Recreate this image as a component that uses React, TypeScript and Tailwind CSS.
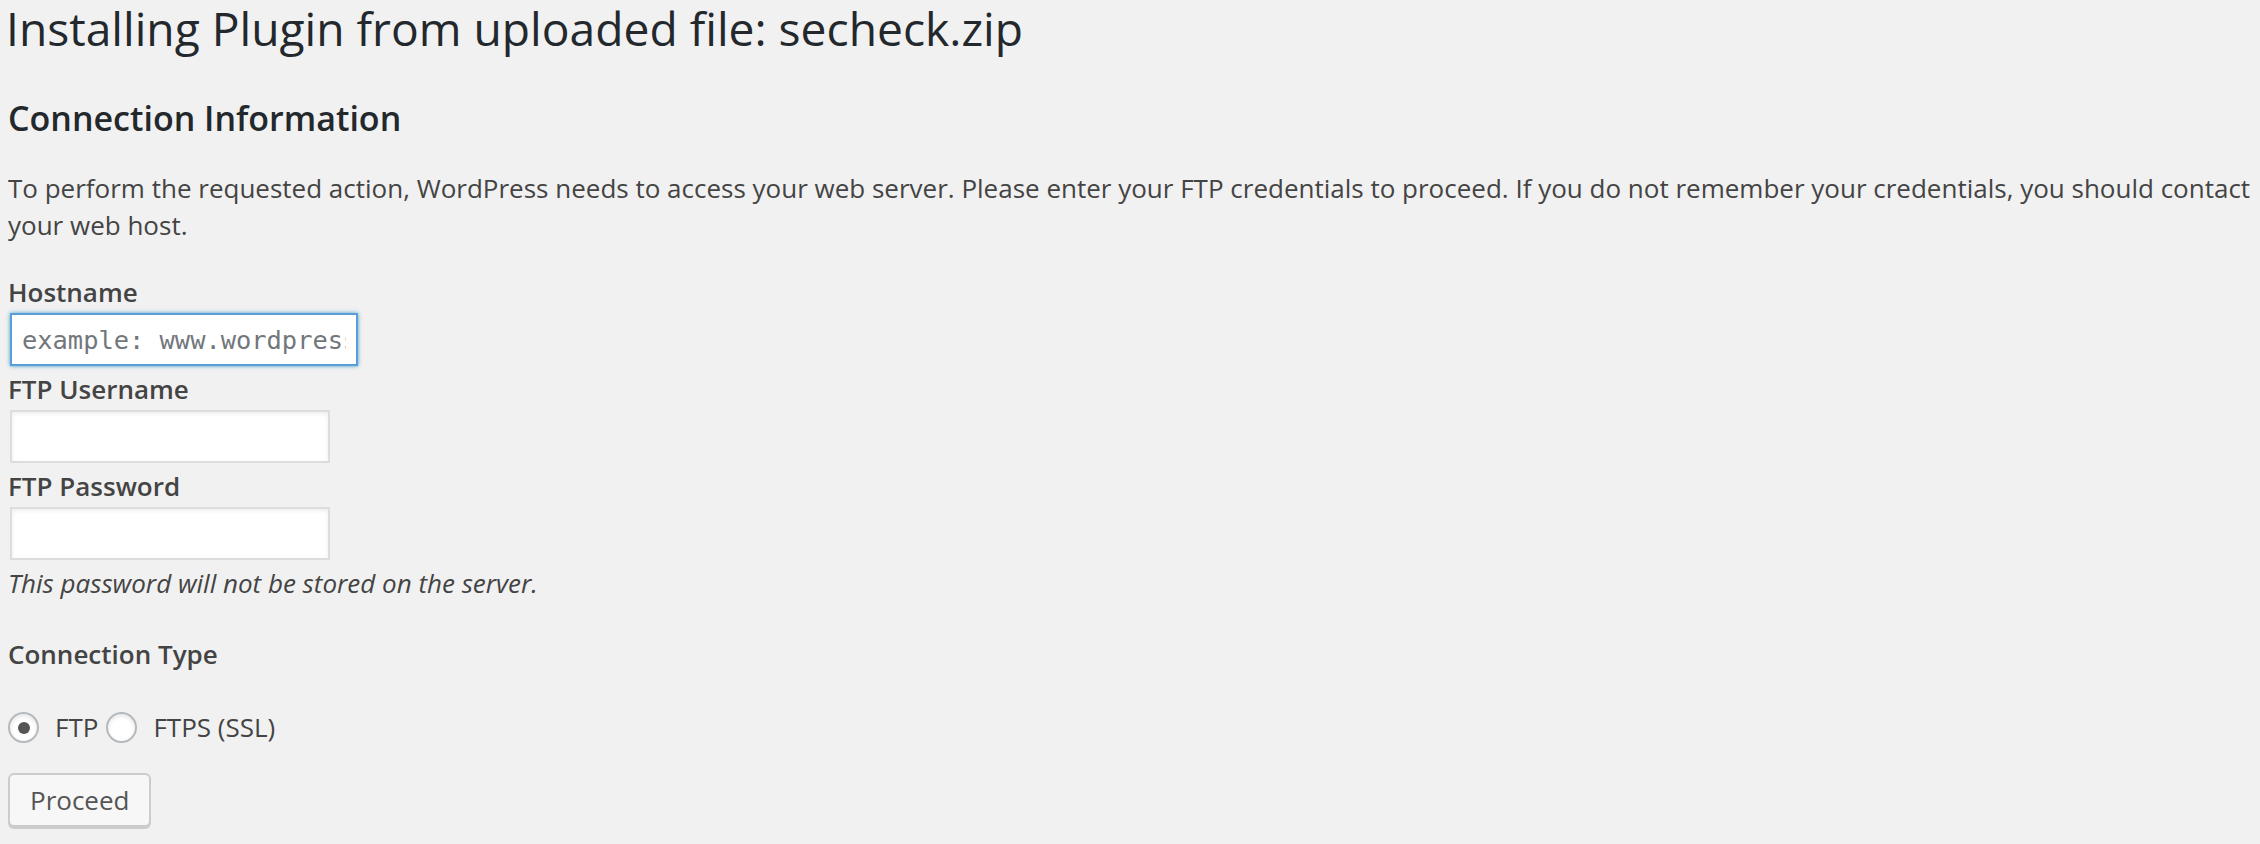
import React from 'react';

export default function App() {
  return (
    <div className="min-h-screen bg-[#f1f1f1] font-['Open_Sans',sans-serif] text-[#444] overflow-hidden">
      <div className="pl-2 pr-2">
        {/* PAGE TITLE */}
        <h1 className="mt-[-1px] ml-[-2px] text-[46.2px] leading-[60px] font-normal text-[#23282d]">
          Installing Plugin from uploaded file: secheck.zip
        </h1>

        {/* CONNECTION FORM */}
        <form className="flex flex-col items-start">
          <h2 className="mt-[37px] text-[34px] leading-[44px] font-semibold text-[#23282d]">Connection Information</h2>

          <p className="mt-[30px] text-[26px] leading-[37px]">
            To perform the requested action, WordPress needs to access your web server. Please enter your FTP credentials to proceed. If you do not remember your credentials, you should contact your web host.
          </p>

          <label htmlFor="hostname" className="mt-[30px] text-[26px] leading-[37px] font-semibold">Hostname</label>
          <input
            id="hostname"
            type="text"
            placeholder="example: www.wordpress.org"
            className="mt-[2px] ml-[2px] w-[348px] h-[53px] bg-white border-2 border-[#5b9dd9] shadow-[0_0_4px_rgba(30,140,190,0.8)] px-[10px] font-['DejaVu_Sans_Mono',monospace] text-[25.4px] text-[#333] placeholder:text-[#72777c] outline-none"
          />

          <label htmlFor="username" className="mt-[5px] text-[26px] leading-[37px] font-semibold">FTP Username</label>
          <input
            id="username"
            type="text"
            className="mt-[2px] ml-[2px] w-[320px] h-[53px] bg-white border-2 border-[#ddd] shadow-[inset_0_2px_4px_rgba(0,0,0,0.07)] px-[10px] text-[26px] outline-none"
          />

          <label htmlFor="password" className="mt-[5px] text-[26px] leading-[37px] font-semibold">FTP Password</label>
          <input
            id="password"
            type="password"
            className="mt-[2px] ml-[2px] w-[320px] h-[53px] bg-white border-2 border-[#ddd] shadow-[inset_0_2px_4px_rgba(0,0,0,0.07)] px-[10px] text-[26px] outline-none"
          />
          <span className="mt-[5px] text-[26px] leading-[37px] italic">This password will not be stored on the server.</span>

          <h4 className="mt-[34px] text-[26px] leading-[37px] font-semibold">Connection Type</h4>

          <div className="mt-[36px] flex items-center text-[26px] leading-[37px]">
            <label className="flex items-center">
              <span className="w-[31px] h-[31px] rounded-full bg-white border-2 border-[#b4b9be] shadow-[inset_0_2px_4px_rgba(0,0,0,0.1)] flex items-center justify-center">
                <span className="w-[12px] h-[12px] rounded-full bg-[#555]" />
              </span>
              <span className="ml-[16px]">FTP</span>
            </label>
            <label className="flex items-center ml-[8px]">
              <span className="w-[31px] h-[31px] rounded-full bg-white border-2 border-[#b4b9be] shadow-[inset_0_2px_4px_rgba(0,0,0,0.1)]" />
              <span className="ml-[16px]">FTPS (SSL)</span>
            </label>
          </div>

          <button
            type="button"
            className="mt-[27px] h-[54px] px-[20px] bg-[#f7f7f7] border-2 border-[#ccc] rounded-[6px] shadow-[0_2px_0_#ccc] text-[26px] leading-[50px] text-[#555]"
          >
            Proceed
          </button>
        </form>
      </div>
    </div>
  );
}
